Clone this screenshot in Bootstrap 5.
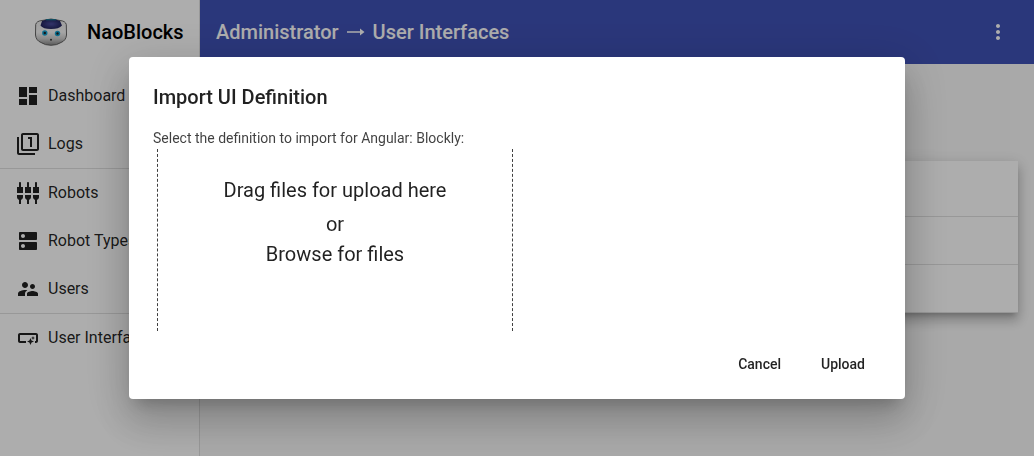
<!DOCTYPE html>
<html lang="en">
<head>
<meta charset="utf-8">
<meta name="viewport" content="width=device-width, initial-scale=1">
<title>NaoBlocks</title>
<link href="https://cdn.jsdelivr.net/npm/bootstrap@5.3.0/dist/css/bootstrap.min.css" rel="stylesheet">
<style>
body{font-family:Roboto,"Liberation Sans",sans-serif;background:#fafafa;color:rgba(0,0,0,.87);height:100vh;overflow:hidden}
.side{width:200px;border-right:1px solid rgba(0,0,0,.12);background:#fff}
.bar{height:64px;font-size:20px;font-weight:500;line-height:32px}
.brandbar{padding-left:33px;gap:18px;color:#000}
.topbar{background:#3f51b5;color:#fff}
.topbar .arrow{margin:0 8px}
.side-link{height:48px;padding-left:16px;gap:8px;font-size:16px;color:rgba(0,0,0,.87);white-space:nowrap;text-decoration:none}
.rule{height:1px;background:rgba(0,0,0,.12)}
svg.ico{width:24px;height:24px;fill:currentColor;flex:none}
.panel{margin:97px 16px 0;background:#fff;box-shadow:0 5px 5px -3px rgba(0,0,0,.2),0 8px 10px 1px rgba(0,0,0,.14),0 3px 14px 2px rgba(0,0,0,.12)}
.line{height:48px;border-bottom:1px solid rgba(0,0,0,.12)}
.line:first-child{height:56px}
.modal-backdrop{--bs-backdrop-opacity:.32}
.modal-dialog.import{max-width:776px;margin:57px 0 0 129px}
.import .modal-content{height:342px;padding:24px 24px 17px;border:0;border-radius:4px;color:rgba(0,0,0,.87);box-shadow:0 11px 15px -7px rgba(0,0,0,.2),0 24px 38px 3px rgba(0,0,0,.14),0 9px 46px 8px rgba(0,0,0,.12)}
.import h1{font-size:20px;line-height:32px;font-weight:500;margin-bottom:14px}
.prompt{font-size:14px;line-height:22px;color:rgba(0,0,0,.75)}
.drop{flex:none;width:356px;height:182px;margin-left:4px;padding-top:25px;border:dashed rgba(0,0,0,.75);border-width:0 1px;font-size:20px;line-height:32px}
.drop .or{line-height:36px}
.drop .browse{line-height:24px}
.acts{gap:8px;margin-top:15px}
.acts .btn{font-size:14px;font-weight:500;line-height:36px;padding:0 16px;border:0;color:rgba(0,0,0,.87)}
</style>
</head>
<body>
<div class="d-flex h-100">
  <aside class="side flex-shrink-0">
    <div class="bar brandbar d-flex align-items-center">
      <svg width="36" height="30" viewBox="0 0 36 30" class="flex-shrink-0">
        <defs>
          <linearGradient id="face" x1="0" y1="0" x2="0" y2="1"><stop offset="0" stop-color="#e8e8e8"/><stop offset=".5" stop-color="#f4f4f4"/><stop offset=".75" stop-color="#ccc"/><stop offset="1" stop-color="#858585"/></linearGradient>
          <radialGradient id="cap"><stop offset="0" stop-color="#4a4c9c"/><stop offset="1" stop-color="#22255e"/></radialGradient>
        </defs>
        <path d="M9 3.500Q18 0.500 27 3.500Q32.500 4 33.300 7.500L33.500 18Q33 23.500 28 25.500Q24 28.300 18 28.300T8 25.500Q3 23.500 2.500 18L2.700 7.500Q3.500 4 9 3.500Z" fill="url(#face)" stroke="#555" stroke-width=".9"/>
        <path d="M9 4Q13 2 18 2T27 4L29 8.500Q26 12 18 12T7.500 8.500Z" fill="url(#cap)"/>
        <path d="M13 2.700h10" stroke="#187994" stroke-width="1.200"/>
        <circle cx="11.800" cy="16" r="2.700" fill="#16a5d5"/><circle cx="24.500" cy="16.500" r="2.700" fill="#16a5d5"/>
        <circle cx="11.800" cy="16" r="1.200" fill="#222"/><circle cx="24.500" cy="16.500" r="1.200" fill="#222"/>
        <circle cx="18" cy="22.700" r="1" fill="#333"/>
      </svg>
      <span>NaoBlocks</span>
    </div>
    <nav class="pt-2">
      <a class="side-link d-flex align-items-center"><svg class="ico" viewBox="0 0 24 24"><path d="M3 13h8V3H3v10zm0 8h8v-6H3v6zm10 0h8V11h-8v10zm0-18v6h8V3h-8z"/></svg>Dashboard</a>
      <a class="side-link d-flex align-items-center"><svg class="ico" viewBox="0 0 24 24"><path d="M3 5H1v16c0 1.100.9 2 2 2h16v-2H3V5zm11 10h2V5h-4v2h2v8zm7-14H7c-1.100 0-2 .9-2 2v14c0 1.100.9 2 2 2h14c1.100 0 2-.9 2-2V3c0-1.100-.9-2-2-2zm0 16H7V3h14v14z"/></svg>Logs</a>
      <div class="rule"></div>
      <a class="side-link d-flex align-items-center"><svg class="ico" viewBox="0 0 24 24"><path d="M5 2c0-.55-.45-1-1-1s-1 .45-1 1v4H1v6h6V6H5V2zm4 14c0 1.300.84 2.400 2 2.820V23h2v-4.180c1.160-.41 2-1.510 2-2.820v-2H9v2zm-8 0c0 1.300.84 2.400 2 2.820V23h2v-4.180C6.160 18.400 7 17.300 7 16v-2H1v2zM21 6V2c0-.55-.45-1-1-1s-1 .45-1 1v4h-2v6h6V6h-2zm-8-4c0-.55-.45-1-1-1s-1 .45-1 1v4H9v6h6V6h-2V2zm4 14c0 1.300.84 2.400 2 2.820V23h2v-4.180c1.160-.41 2-1.510 2-2.820v-2h-6v2z"/></svg>Robots</a>
      <a class="side-link d-flex align-items-center"><svg class="ico" viewBox="0 0 24 24"><path d="M20 13H4c-.55 0-1 .45-1 1v6c0 .55.45 1 1 1h16c.55 0 1-.45 1-1v-6c0-.55-.45-1-1-1zM7 19c-1.100 0-2-.9-2-2s.9-2 2-2 2 .9 2 2-.9 2-2 2zM20 3H4c-.55 0-1 .45-1 1v6c0 .55.45 1 1 1h16c.55 0 1-.45 1-1V4c0-.55-.45-1-1-1zM7 9c-1.100 0-2-.9-2-2s.9-2 2-2 2 .9 2 2-.9 2-2 2z"/></svg>Robot Types</a>
      <a class="side-link d-flex align-items-center"><svg class="ico" viewBox="0 0 24 24"><path d="M16.500 12c1.380 0 2.490-1.120 2.490-2.500S17.880 7 16.500 7C15.120 7 14 8.120 14 9.500s1.120 2.500 2.500 2.500zM9 11c1.660 0 2.990-1.340 2.990-3S10.660 5 9 5C7.340 5 6 6.340 6 8s1.340 3 3 3zm7.500 3c-1.830 0-5.500.92-5.500 2.750V19h11v-2.250c0-1.830-3.670-2.750-5.500-2.750zM9 13c-2.330 0-7 1.170-7 3.500V19h7v-2.250c0-.85.33-2.340 2.370-3.470C10.500 13.100 9.660 13 9 13z"/></svg>Users</a>
      <div class="rule"></div>
      <a class="side-link d-flex align-items-center"><svg class="ico" viewBox="0 0 24 24"><path d="M22 9v6c0 1.100-.9 2-2 2h-1v-2h1V9H4v6h6v2H4c-1.100 0-2-.9-2-2V9c0-1.100.9-2 2-2h16c1.100 0 2 .9 2 2zm-7.500 10 1.090-2.410L18 15.500l-2.410-1.090L14.500 12l-1.090 2.410L11 15.500l2.410 1.090L14.500 19zm2.500-5 .62-1.380L19 12l-1.380-.62L17 10l-.62 1.380L15 12l1.380.62L17 14z"/></svg>User Interfaces</a>
    </nav>
  </aside>
  <main class="flex-grow-1">
    <header class="bar topbar d-flex align-items-center px-3">
      <span>Administrator</span>
      <svg class="arrow" width="18" height="10" viewBox="0 0 18 10"><path d="M0 4.200h13V1.500L17.500 5 13 8.500V5.800H0z" fill="#fff"/></svg>
      <span>User Interfaces</span>
      <svg class="ico ms-auto me-2" viewBox="0 0 24 24"><path d="M12 8c1.100 0 2-.9 2-2s-.9-2-2-2-2 .9-2 2 .9 2 2 2zm0 2c-1.100 0-2 .9-2 2s.9 2 2 2 2-.9 2-2-.9-2-2-2zm0 6c-1.100 0-2 .9-2 2s.9 2 2 2 2-.9 2-2-.9-2-2-2z"/></svg>
    </header>
    <div class="panel"><div class="line"></div><div class="line"></div><div class="line"></div></div>
  </main>
</div>
<div class="modal-backdrop show"></div>
<div class="modal d-block" tabindex="-1" role="dialog" aria-modal="true">
  <div class="modal-dialog import">
    <div class="modal-content">
      <h1>Import UI Definition</h1>
      <div class="prompt">Select the definition to import for Angular: Blockly:</div>
      <div class="drop text-center">
        <div>Drag files for upload here</div>
        <div class="or">or</div>
        <div class="browse">Browse for files</div>
      </div>
      <div class="acts d-flex justify-content-end">
        <button class="btn" type="button">Cancel</button>
        <button class="btn" type="button">Upload</button>
      </div>
    </div>
  </div>
</div>
<script src="https://cdn.jsdelivr.net/npm/bootstrap@5.3.0/dist/js/bootstrap.bundle.min.js"></script>
</body>
</html>
